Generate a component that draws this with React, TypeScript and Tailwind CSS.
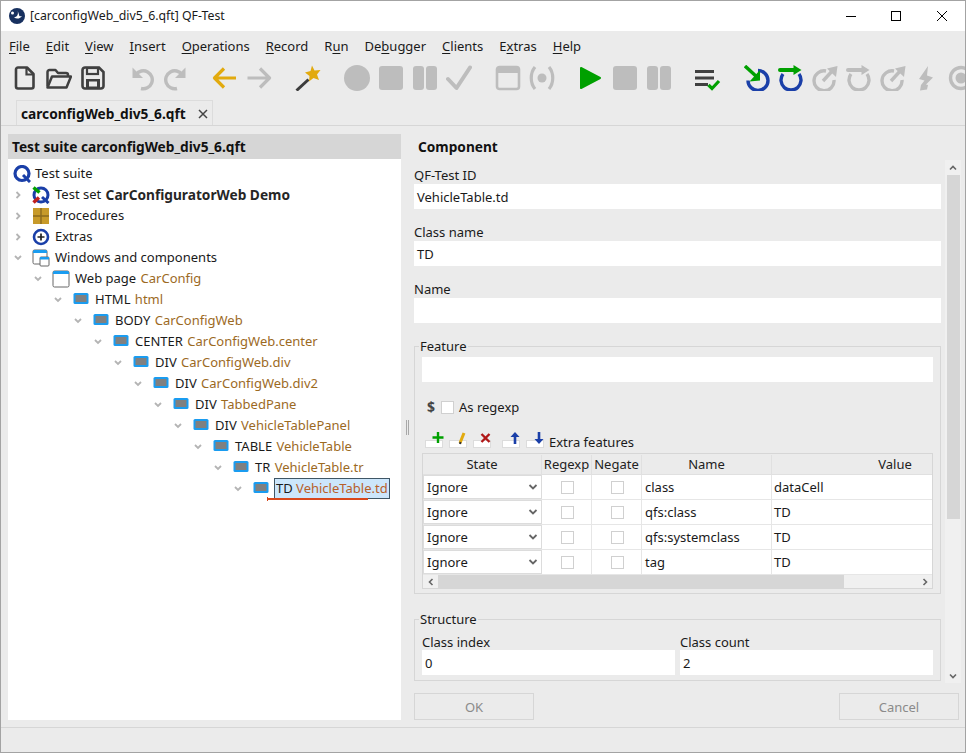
import React, { ReactNode } from 'react';

const GRAY = '#bdbdbd';
const DARK = '#404040';
const GOLD = '#e2aa0e';
const GREEN = '#00a000';
const BLUE = '#1a3fa8';
const ITEM_BROWN = 'text-[#9c6a1f]';

const Ico = ({ children }: { children: ReactNode }) => (
  <svg width="26" height="26" viewBox="0 0 26 26" fill="none">
    {children}
  </svg>
);

// Toolbar icons
const NewFile = () => (
  <Ico>
    <path d="M6 2.500h9l6.500 6.500v12.500a2 2 0 0 1-2 2H6a2 2 0 0 1-2-2v-17a2 2 0 0 1 2-2z" stroke={DARK} strokeWidth="2.600" strokeLinejoin="round" />
    <path d="M14.500 3v6.500h6.500" stroke={DARK} strokeWidth="2.200" />
  </Ico>
);
const OpenFolder = () => (
  <Ico>
    <path d="M1.500 21.500V7a2 2 0 0 1 2-2h6l2.500 3h8a2 2 0 0 1 2 2v1.500" stroke={DARK} strokeWidth="2.500" strokeLinejoin="round" />
    <path d="M1.500 22.500l4.500-11h19l-4.500 11z" stroke={DARK} strokeWidth="2.500" strokeLinejoin="round" fill="none" />
  </Ico>
);
const SaveDisk = () => (
  <Ico>
    <path d="M5 2.500h14l4.500 4.500v14a2.500 2.500 0 0 1-2.500 2.500H5A2.500 2.500 0 0 1 2.500 21V5A2.500 2.500 0 0 1 5 2.500z" stroke={DARK} strokeWidth="2.600" />
    <rect x="7" y="3" width="11" height="6" stroke={DARK} strokeWidth="2.200" />
    <rect x="6" y="14" width="14" height="9" fill={DARK} />
    <rect x="9" y="16.500" width="8" height="5" fill="#ebebeb" />
  </Ico>
);
const Undo = () => (
  <Ico>
    <path d="M7 9.500a9 9 0 1 1 5 14" stroke={GRAY} strokeWidth="3.400" />
    <path d="M3.500 2.500v10.500h10.500z" fill={GRAY} />
  </Ico>
);
const Redo = () => (
  <Ico>
    <path d="M19 9.500a9 9 0 1 0-5 14" stroke={GRAY} strokeWidth="3.400" />
    <path d="M22.500 2.500v10.500h-10.500z" fill={GRAY} />
  </Ico>
);
const ArrowL = ({ c }: { c: string }) => (
  <Ico>
    <path d="M24 13H3M12 3.500L2.500 13l9.500 9.500" stroke={c} strokeWidth="3.200" strokeLinejoin="round" />
  </Ico>
);
const ArrowR = ({ c }: { c: string }) => (
  <Ico>
    <path d="M1.500 13H23M14 3.500l9.500 9.500-9.500 9.500" stroke={c} strokeWidth="3.200" strokeLinejoin="round" />
  </Ico>
);
const Wand = () => (
  <Ico>
    <path d="M1.500 25.500l12-11" stroke="#3c3c3c" strokeWidth="3" />
    <path d="M17 .5l2.500 5 6-.500-3.500 4.500 2 5.500-5.500-2-4.500 3.500.500-5.500-4.500-3.500 5.500-1.500z" fill={GOLD} />
  </Ico>
);
const Disc = () => (
  <Ico>
    <circle cx="13" cy="13" r="13" fill={GRAY} />
  </Ico>
);
const Stop = ({ c = GRAY }: { c?: string }) => (
  <Ico>
    <rect x="1" y="1" width="24" height="24" rx="3" fill={c} />
  </Ico>
);
const Pause = () => (
  <Ico>
    <rect x="1" y="1" width="11" height="24" rx="3" fill={GRAY} />
    <rect x="14" y="1" width="11" height="24" rx="3" fill={GRAY} />
  </Ico>
);
const Check = () => (
  <Ico>
    <path d="M2 14l8.500 9L24 2.500" stroke={GRAY} strokeWidth="4" strokeLinejoin="round" strokeLinecap="round" />
  </Ico>
);
const WinGray = () => (
  <Ico>
    <rect x="2" y="2" width="22" height="22" rx="2.500" stroke={GRAY} strokeWidth="2.600" />
    <rect x="2" y="2" width="22" height="6" fill={GRAY} />
  </Ico>
);
const Signal = () => (
  <Ico>
    <circle cx="13" cy="13" r="4.500" fill={GRAY} />
    <path d="M6 2C1 8 1 18 6 24M20 2c5 6 5 16 0 22" stroke={GRAY} strokeWidth="3.200" />
  </Ico>
);
const Play = () => (
  <Ico>
    <path d="M3 3l19 10L3 23z" fill={GREEN} stroke={GREEN} strokeWidth="2" strokeLinejoin="round" />
  </Ico>
);
const ListCheck = () => (
  <Ico>
    <g transform="translate(0 3)">
      <path d="M0 2h19v3H0zM0 8.500h19v3H0zM0 15h13v3H0z" fill={DARK} />
      <path d="M13.500 17l3.500 3.500 7-7.500" stroke={GREEN} strokeWidth="3.200" />
    </g>
  </Ico>
);
const StepIn = ({ ring, arrow }: { ring: string; arrow: string }) => (
  <Ico>
    <path d="M14 5.500a10 10 0 1 1-10 10" stroke={ring} strokeWidth="3.400" />
    <path d="M1 1l12 11" stroke={arrow} strokeWidth="3.400" />
    <path d="M5.500 16.500L16 15.500V5z" fill={arrow} />
  </Ico>
);
const StepOver = ({ ring, arrow }: { ring: string; arrow: string }) => (
  <Ico>
    <path d="M21 9a10 10 0 1 1-16 0" stroke={ring} strokeWidth="3.400" />
    <path d="M2 5h14" stroke={arrow} strokeWidth="4" strokeLinecap="round" />
    <path d="M15.500 0l8 5-8 5z" fill={arrow} />
  </Ico>
);
const StepOut = () => (
  <Ico>
    <path d="M14 6a10 10 0 1 0 8 9" stroke={GRAY} strokeWidth="3.400" />
    <path d="M11 16L22 4" stroke={GRAY} strokeWidth="3.400" />
    <path d="M15 3.500L25.500 1 24 12z" fill={GRAY} />
  </Ico>
);
const Bolt = () => (
  <Ico>
    <path d="M14 1L5 14l5.500 1.500L7 20l-1 5.500 7-1 1-4.500-2-.5 7-7-6-2z" fill={GRAY} />
  </Ico>
);
const Target = () => (
  <Ico>
    <circle cx="13" cy="13" r="10.500" stroke={GRAY} strokeWidth="3.400" />
    <circle cx="13" cy="13" r="5.500" fill={GRAY} />
  </Ico>
);

const Group = ({ children, last }: { children: ReactNode; last?: boolean }) => (
  <div className={`flex shrink-0 ${last ? '' : 'mr-[15px]'}`}>
    {React.Children.map(children, (c) => (
      <div className="flex h-[26px] w-[34px] shrink-0 items-center justify-center">{c}</div>
    ))}
  </div>
);

// Tree icons
const QIcon = () => (
  <svg width="18" height="18" viewBox="0 0 18 18" fill="none">
    <circle cx="9" cy="8.500" r="7" stroke={BLUE} strokeWidth="3.200" />
    <path d="M10 10l7 7" stroke={BLUE} strokeWidth="3" />
  </svg>
);
const QSetIcon = () => (
  <svg width="18" height="18" viewBox="0 0 18 18" fill="none">
    <circle cx="9" cy="9" r="7" stroke={BLUE} strokeWidth="3" />
    <path d="M10 11l6.500 6" stroke={BLUE} strokeWidth="3" />
    <path d="M1.500 1.500l6 5" stroke={GREEN} strokeWidth="3.500" />
    <path d="M1.500 16.500l5.500-5" stroke="#c02020" strokeWidth="3.500" />
  </svg>
);
const ProcIcon = () => (
  <svg width="18" height="18" viewBox="0 0 18 18">
    <rect x="1" y="1" width="16" height="16" fill="#c79a2a" />
    <path d="M9 1v16M1 9h16" stroke="#8a6a1e" strokeWidth="1.400" />
  </svg>
);
const PlusIcon = () => (
  <svg width="18" height="18" viewBox="0 0 18 18" fill="none">
    <circle cx="9" cy="9" r="7" stroke={BLUE} strokeWidth="2.600" />
    <path d="M9 5.500v7M5.500 9h7" stroke="#222" strokeWidth="1.700" />
  </svg>
);
const WindowsIcon = () => (
  <svg width="18" height="18" viewBox="0 0 18 18" fill="none">
    <rect x="1" y="1" width="14" height="14" rx="1.500" fill="#fff" stroke="#666" />
    <path d="M1 2.500A1.500 1.500 0 0 1 2.500 1h11A1.500 1.500 0 0 1 15 2.500V4H1z" fill="#1a9cf0" />
    <rect x="8" y="8" width="9" height="9" rx="1" fill="#fff" stroke="#666" />
    <rect x="8" y="8" width="9" height="2.500" fill="#1a9cf0" />
  </svg>
);
const PageIcon = () => (
  <svg width="18" height="18" viewBox="0 0 18 18" fill="none">
    <rect x="1" y="1" width="16" height="16" rx="1.500" fill="#fff" stroke="#666" />
    <path d="M1 2.500A1.500 1.500 0 0 1 2.500 1h13A1.500 1.500 0 0 1 17 2.500V4H1z" fill="#1a9cf0" />
  </svg>
);
const CompIcon = () => (
  <svg width="18" height="18" viewBox="0 0 18 18">
    <rect x="1.500" y="2" width="15" height="11" rx="1.500" fill="#1a9cf0" />
    <rect x="3.500" y="4" width="11" height="7" fill="#808080" />
  </svg>
);

type Row = {
  level: number;
  icon: ReactNode;
  label: string;
  name?: string;
  bold?: boolean;
  open?: boolean;
  sel?: boolean;
};

const treeRows: Row[] = [
  { level: 0, icon: <QIcon />, label: 'Test suite' },
  { level: 1, icon: <QSetIcon />, label: 'Test set ', name: 'CarConfiguratorWeb Demo', bold: true },
  { level: 1, icon: <ProcIcon />, label: 'Procedures' },
  { level: 1, icon: <PlusIcon />, label: 'Extras' },
  { level: 1, icon: <WindowsIcon />, label: 'Windows and components', open: true },
  { level: 2, icon: <PageIcon />, label: 'Web page ', name: 'CarConfig', open: true },
  { level: 3, icon: <CompIcon />, label: 'HTML ', name: 'html', open: true },
  { level: 4, icon: <CompIcon />, label: 'BODY ', name: 'CarConfigWeb', open: true },
  { level: 5, icon: <CompIcon />, label: 'CENTER ', name: 'CarConfigWeb.center', open: true },
  { level: 6, icon: <CompIcon />, label: 'DIV ', name: 'CarConfigWeb.div', open: true },
  { level: 7, icon: <CompIcon />, label: 'DIV ', name: 'CarConfigWeb.div2', open: true },
  { level: 8, icon: <CompIcon />, label: 'DIV ', name: 'TabbedPane', open: true },
  { level: 9, icon: <CompIcon />, label: 'DIV ', name: 'VehicleTablePanel', open: true },
  { level: 10, icon: <CompIcon />, label: 'TABLE ', name: 'VehicleTable', open: true },
  { level: 11, icon: <CompIcon />, label: 'TR ', name: 'VehicleTable.tr', open: true },
  { level: 12, icon: <CompIcon />, label: 'TD ', name: 'VehicleTable.td', open: true, sel: true },
];

const Chevron = ({ open }: { open?: boolean }) => (
  <svg width="10" height="10" viewBox="0 0 10 10" fill="none" className="shrink-0">
    <path d={open ? 'M2 3l3 3 3-3' : 'M3.500 2l3 3-3 3'} stroke="#b4b4b4" strokeWidth="1.800" />
  </svg>
);

const TreeRow = ({ row }: { row: Row }) => {
  const left = row.level === 0 ? 5 : 5 + 20 * (row.level - 1);
  return (
    <div className="flex h-[21px] items-center whitespace-pre" style={{ paddingLeft: left }}>
      {row.level > 0 && (
        <div className="mr-[9px]">
          <Chevron open={row.open} />
        </div>
      )}
      <div className="flex h-[18px] w-[18px] shrink-0 items-center justify-center">{row.icon}</div>
      <div
        className={`relative flex h-[21px] items-center px-[1px] ${row.level === 0 ? 'ml-[3px]' : 'ml-[4px]'} ${
          row.sel ? 'border border-[#3f5666] bg-[#cce6fb]' : ''
        }`}
      >
        <span>{row.label}</span>
        {row.name && (
          <span
            className={
              row.bold
                ? 'ml-[1px] text-[13.700px] font-bold text-[#262626]'
                : row.sel
                  ? 'text-[#b8602a]'
                  : `ml-[1px] ${ITEM_BROWN}`
            }
          >
            {row.name}
          </span>
        )}
        {row.sel && (
          <>
            <span className="absolute left-[-8px] top-[19px] h-[2px] w-[101px] bg-[#d9481c]" />
            <span className="absolute left-[-8px] top-[18px] h-[4px] w-[1px] bg-[#d9481c]" />
          </>
        )}
      </div>
    </div>
  );
};

const Menu = ({ pre, u, post }: { pre?: string; u: string; post: string }) => (
  <span>
    {pre}
    <span className="underline underline-offset-2">{u}</span>
    {post}
  </span>
);

const Field = ({ label, value }: { label: string; value?: string }) => (
  <div className="mb-[15px]">
    <div className="flex h-[17px] items-center">{label}</div>
    <div className="flex h-[25px] items-center bg-white pl-[3px] pt-[1px]">{value}</div>
  </div>
);

const MiniBtn = ({ children, className }: { children: ReactNode; className?: string }) => (
  <div className={`relative mb-[1px] h-[17px] w-[18px] shrink-0 ${className ?? ''}`}>
    <div className="absolute bottom-0 left-0 h-[8px] w-[18px] border border-[#dcdcdc] bg-white" />
    <svg width="14" height="14" viewBox="0 0 14 14" fill="none" className="absolute right-[-2px] top-0">
      {children}
    </svg>
  </div>
);

const Checkbox = () => <div className="h-[13px] w-[13px] border border-[#d0d0d0] bg-white" />;

const tableRows = [
  ['class', 'dataCell'],
  ['qfs:class', 'TD'],
  ['qfs:systemclass', 'TD'],
  ['tag', 'TD'],
];

export default function App() {
  return (
    <div className="flex h-[753px] w-[966px] flex-col overflow-hidden border border-[#a3a3a3] bg-[#ebebeb] font-['Noto_Sans',sans-serif] text-[13px] leading-none text-[#1a1a1a]">
      {/* title bar */}
      <div className="flex h-[30px] shrink-0 items-center bg-white">
        <svg width="16" height="16" viewBox="0 0 16 16" className="ml-[8px]">
          <circle cx="8" cy="8" r="8" fill="#17305f" />
          <path d="M8.500 2.500c1 3 .5 6-3.500 7 3 2 6.500 1 8-1.500-1.500.5-3 .5-3-1.500z" fill="#fff" />
          <circle cx="3.500" cy="5" r="1.500" fill="#fff" />
        </svg>
        <span className="ml-[5px] pt-[1px] text-[12.300px]">[carconfigWeb_div5_6.qft] QF-Test</span>
        <div className="ml-auto mr-[18px] flex items-center">
          <div className="h-[1px] w-[10px] bg-black" />
          <div className="ml-[35px] h-[10px] w-[10px] border border-black" />
          <svg width="10" height="10" viewBox="0 0 10 10" className="ml-[36px]">
            <path d="M0 0l10 10M10 0L0 10" stroke="#000" strokeWidth="1" />
          </svg>
        </div>
      </div>

      {/* menu */}
      <div className="flex h-[30px] shrink-0 items-center gap-[16px] pl-[8px] pt-[1px]">
        <Menu u="F" post="ile" />
        <Menu u="E" post="dit" />
        <Menu u="V" post="iew" />
        <Menu u="I" post="nsert" />
        <Menu u="O" post="perations" />
        <Menu u="R" post="ecord" />
        <Menu pre="R" u="u" post="n" />
        <Menu pre="De" u="b" post="ugger" />
        <Menu u="C" post="lients" />
        <Menu pre="E" u="x" post="tras" />
        <Menu u="H" post="elp" />
      </div>

      {/* toolbar */}
      <div className="flex h-[39px] shrink-0 items-start overflow-hidden pl-[6.500px] pt-[4px]">
        <Group>
          <NewFile />
          <OpenFolder />
          <SaveDisk />
        </Group>
        <Group>
          <Undo />
          <Redo />
        </Group>
        <Group>
          <ArrowL c={GOLD} />
          <ArrowR c={GRAY} />
        </Group>
        <Group>
          <Wand />
        </Group>
        <Group>
          <Disc />
          <Stop />
          <Pause />
          <Check />
        </Group>
        <Group>
          <WinGray />
          <Signal />
        </Group>
        <Group>
          <Play />
          <Stop />
          <Pause />
        </Group>
        <Group>
          <ListCheck />
        </Group>
        <Group last>
          <StepIn ring={BLUE} arrow={GREEN} />
          <StepOver ring={BLUE} arrow={GREEN} />
          <StepOut />
          <StepOver ring={GRAY} arrow={GRAY} />
          <StepOut />
          <Bolt />
          <Target />
        </Group>
      </div>

      {/* tabs */}
      <div className="h-[26px] shrink-0 border-b border-[#d6d6d6] pl-[15px]">
        <div className="flex h-[25px] w-[197px] items-center border border-b-0 border-[#dcdcdc] pl-[4px] pt-[2px] text-[13.700px] font-bold text-[#111]">
          <span>carconfigWeb_div5_6.qft</span>
          <svg width="10" height="10" viewBox="0 0 10 10" className="ml-auto mr-[4px]">
            <path d="M1 1l8 8M9 1L1 9" stroke="#444" strokeWidth="1.500" />
          </svg>
        </div>
      </div>

      {/* main */}
      <div className="mt-[8px] flex min-h-0 flex-1">
        <div className="ml-[7px] h-[586px] w-[393px] shrink-0 bg-white">
          <div className="flex h-[25px] items-center bg-[#d6d6d6] pl-[4px] text-[13.700px] font-bold text-[#111]">
            Test suite carconfigWeb_div5_6.qft
          </div>
          <div className="pt-[4px]">
            {treeRows.map((r, i) => (
              <TreeRow key={i} row={r} />
            ))}
          </div>
        </div>

        {/* divider */}
        <div className="flex h-[586px] w-[13px] shrink-0 items-center justify-center gap-[1px]">
          <div className="h-[15px] w-[1px] bg-[#a8a8a8]" />
          <div className="h-[15px] w-[1px] bg-[#a8a8a8]" />
        </div>

        {/* details */}
        <div className="flex w-[551px] shrink-0 flex-col">
          <div className="flex h-[549px]">
            <div className="w-[527px] shrink-0">
              <div className="flex h-[33px] items-start pl-[4px] pt-[6px] text-[13.700px] font-bold text-[#111]">Component</div>
              <Field label="QF-Test ID" value="VehicleTable.td" />
              <Field label="Class name" value="TD" />
              <Field label="Name" />

              <fieldset className="h-[256px] border border-[#d6d6d6] px-[7px]">
                <legend className="ml-[-3px] h-[17px] px-[1px] leading-[17px]">Feature</legend>
                <div className="mt-[2px] h-[25px] bg-white" />
                <div className="mt-[17px] flex h-[16px] items-center">
                  <span className="ml-[5px] text-[14px] font-bold text-[#444]">$</span>
                  <div className="ml-[6px]">
                    <Checkbox />
                  </div>
                  <span className="ml-[5px]">As regexp</span>
                </div>
                <div className="mt-[16px] flex h-[18px] items-end">
                  <MiniBtn className="ml-[3px]">
                    <path d="M7 1v11M1.500 6.500h11" stroke={GREEN} strokeWidth="2.400" />
                  </MiniBtn>
                  <MiniBtn className="ml-[6px]">
                    <path d="M9 2L5 12" stroke={GOLD} strokeWidth="3" />
                    <path d="M5.500 11L5 13" stroke="#333" strokeWidth="2" />
                  </MiniBtn>
                  <MiniBtn className="ml-[6px]">
                    <path d="M2.500 3l8 8M10.500 3l-8 8" stroke="#b01818" strokeWidth="2.400" />
                  </MiniBtn>
                  <MiniBtn className="ml-[11px]">
                    <path d="M7 13V4" stroke={BLUE} strokeWidth="2.600" />
                    <path d="M2.500 6L7 1l4.500 5z" fill={BLUE} />
                  </MiniBtn>
                  <MiniBtn className="ml-[6px]">
                    <path d="M7 1v9" stroke={BLUE} strokeWidth="2.600" />
                    <path d="M2.500 8L7 13l4.500-5z" fill={BLUE} />
                  </MiniBtn>
                  <span className="ml-[5px] flex h-[17px] items-center pt-[3px]">Extra features</span>
                </div>

                <div className="mt-[4px] border border-[#d6d6d6]">
                  <div className="grid h-[21px] grid-cols-[119px_50px_50px_130px_1fr] border-b border-[#e0e0e0] pt-[1px] text-[#222]">
                    <div className="flex items-center justify-center border-r border-[#e0e0e0]">State</div>
                    <div className="flex items-center justify-center border-r border-[#e0e0e0]">Regexp</div>
                    <div className="flex items-center justify-center border-r border-[#e0e0e0]">Negate</div>
                    <div className="flex items-center justify-center border-r border-[#e0e0e0]">Name</div>
                    <div className="flex items-center justify-center pl-[86px]">Value</div>
                  </div>
                  {tableRows.map(([name, value]) => (
                    <div key={name} className="grid h-[25px] grid-cols-[119px_50px_50px_130px_1fr] border-b border-[#e6e6e6] bg-white">
                      <div className="flex items-center justify-between border border-[#dcdcdc] pl-[3px] pr-[3px]">
                        <span>Ignore</span>
                        <svg width="10" height="8" viewBox="0 0 10 8" fill="none">
                          <path d="M1.500 2l3.500 3.500L8.500 2" stroke="#666" strokeWidth="1.800" />
                        </svg>
                      </div>
                      <div className="flex items-center justify-center border-r border-[#e6e6e6] pl-[1px]">
                        <Checkbox />
                      </div>
                      <div className="flex items-center justify-center border-r border-[#e6e6e6] pl-[1px]">
                        <Checkbox />
                      </div>
                      <div className="flex items-center border-r border-[#e6e6e6] pl-[3px] pt-[1px]">{name}</div>
                      <div className="flex items-center pl-[2px] pt-[1px]">{value}</div>
                    </div>
                  ))}
                  <div className="flex h-[13px] bg-[#f0f0f0]">
                    <div className="flex w-[15px] items-center justify-center">
                      <svg width="8" height="8" viewBox="0 0 8 8" fill="none">
                        <path d="M5.500 1L2.500 4l3 3" stroke="#666" strokeWidth="1.600" />
                      </svg>
                    </div>
                    <div className="w-[406px] bg-[#d6d6d6]" />
                    <div className="ml-auto flex w-[15px] items-center justify-center">
                      <svg width="8" height="8" viewBox="0 0 8 8" fill="none">
                        <path d="M2.500 1l3 3-3 3" stroke="#666" strokeWidth="1.600" />
                      </svg>
                    </div>
                  </div>
                </div>
              </fieldset>

              <fieldset className="mt-[17px] h-[70px] border border-[#d6d6d6] px-[7px]">
                <legend className="ml-[-3px] h-[17px] px-[1px] leading-[17px]">Structure</legend>
                <div className="grid grid-cols-2 gap-x-[5px] pt-[5px]">
                  <div>
                    <div className="flex h-[17px] items-center pt-[1px]">Class index</div>
                    <div className="flex h-[25px] items-center bg-white pl-[3px] pt-[2px]">0</div>
                  </div>
                  <div>
                    <div className="flex h-[17px] items-center pt-[1px]">Class count</div>
                    <div className="flex h-[25px] items-center bg-white pl-[3px] pt-[2px]">2</div>
                  </div>
                </div>
              </fieldset>
            </div>

            {/* vertical scrollbar */}
            <div className="ml-[4px] mt-[26px] flex h-[523px] w-[16px] shrink-0 flex-col bg-[#f0f0f0]">
              <div className="flex h-[15px] shrink-0 items-center justify-center">
                <svg width="8" height="8" viewBox="0 0 8 8" fill="none">
                  <path d="M1 5.500l3-3 3 3" stroke="#666" strokeWidth="1.600" />
                </svg>
              </div>
              <div className="mx-auto h-[344px] w-[13px] bg-[#d6d6d6]" />
              <div className="mt-auto flex h-[15px] items-center justify-center">
                <svg width="8" height="8" viewBox="0 0 8 8" fill="none">
                  <path d="M1 2.500l3 3 3-3" stroke="#666" strokeWidth="1.600" />
                </svg>
              </div>
            </div>
          </div>

          <div className="mt-[10px] flex w-[545px] justify-between">
            <div className="flex h-[27px] w-[120px] items-center justify-center border border-[#d6d6d6] pt-[2px] text-[#8a8a8a]">OK</div>
            <div className="flex h-[27px] w-[120px] items-center justify-center border border-[#d6d6d6] pt-[2px] text-[#8a8a8a]">Cancel</div>
          </div>
        </div>
      </div>

      {/* status bar */}
      <div className="h-[25px] shrink-0 border-t border-[#d6d6d6]" />
    </div>
  );
}
